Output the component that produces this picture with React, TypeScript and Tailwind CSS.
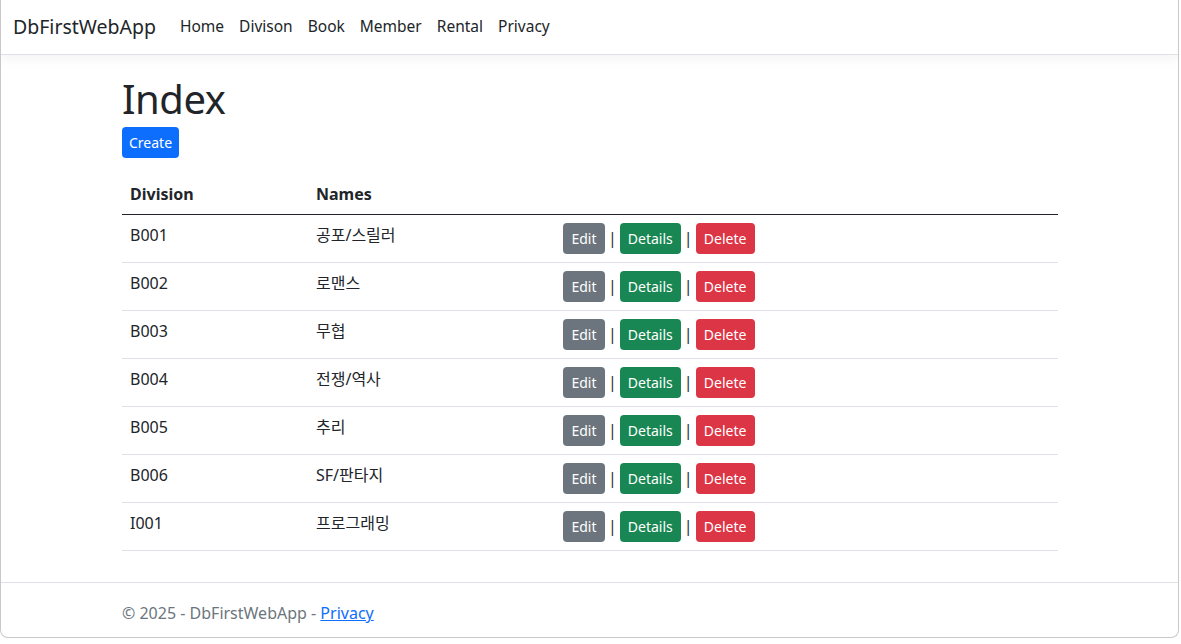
const rows = [
  { code: "B001", name: "공포/스릴러" },
  { code: "B002", name: "로맨스" },
  { code: "B003", name: "무협" },
  { code: "B004", name: "전쟁/역사" },
  { code: "B005", name: "추리" },
  { code: "B006", name: "SF/판타지" },
  { code: "I001", name: "프로그래밍" },
];

const navLinks = ["Home", "Divison", "Book", "Member", "Rental", "Privacy"];

export default function App() {
  return (
    <div className="bg-white h-[644px]">
      <div
        className="h-[638px] w-[1179px] bg-white text-[#212529] flex flex-col border-x border-b border-[#c8c8c8] rounded-b-lg overflow-hidden"
        style={{ fontFamily: '"Noto Sans", "Noto Sans CJK KR", sans-serif' }}
      >
        <header className="h-[55px] shrink-0 bg-white border-b border-[#dee2e6] shadow-[0_4px_12px_rgba(0,0,0,0.05)] flex items-center px-[12px]">
          <span className="text-[19.5px] mr-[24px] leading-none">DbFirstWebApp</span>
          <nav className="flex gap-[15px] text-[15.5px] leading-none">
            {navLinks.map((l) => (
              <a key={l} className="text-[#212529]">
                {l}
              </a>
            ))}
          </nav>
        </header>

        <main className="flex-1 w-[936px] ml-[121px] pt-[20px]">
          <h1 className="text-[40px] leading-[1.2] font-normal tracking-[-0.5px] mb-[4px]">Index</h1>
          <button className="bg-[#0d6efd] text-white text-[14px] h-[31px] px-[7px] rounded-[4px]">
            Create
          </button>

          <table className="w-full mt-[16px] text-[16px] border-collapse">
            <thead>
              <tr className="border-b border-[#212529] h-[40px]">
                <th className="text-left font-bold px-[8px] w-[186px]">Division</th>
                <th className="text-left font-bold px-[8px] w-[247px]">Names</th>
                <th className="px-[8px]"></th>
              </tr>
            </thead>
            <tbody>
              {rows.map((r) => (
                <tr key={r.code} className="border-b border-[#dee2e6]">
                  <td className="px-[8px] pt-[8px] pb-[8px] align-top">{r.code}</td>
                  <td className="px-[8px] pt-[8px] pb-[8px] align-top">{r.name}</td>
                  <td className="px-[8px] py-[8px]">
                    <div className="flex items-center gap-[3px] text-[14px]">
                      <span className="bg-[#6c757d] text-white h-[31px] w-[42px] justify-center flex items-center rounded-[4px]">Edit</span>
                      <span className="text-[#3b2b2b] text-[16px]">|</span>
                      <span className="bg-[#198754] text-white h-[31px] w-[61px] justify-center flex items-center rounded-[4px]">Details</span>
                      <span className="text-[#2b2b3b] text-[16px]">|</span>
                      <span className="bg-[#dc3545] text-white h-[31px] w-[59px] justify-center flex items-center rounded-[4px]">Delete</span>
                    </div>
                  </td>
                </tr>
              ))}
            </tbody>
          </table>
        </main>

        <footer className="border-t border-[#dee2e6] h-[55px] shrink-0 pt-[18px]">
          <div className="w-[936px] ml-[121px] text-[16px] leading-[24px] text-[#6c757d]">
            © 2025 - DbFirstWebApp - <a className="text-[#0d6efd] underline">Privacy</a>
          </div>
        </footer>
      </div>
    </div>
  );
}
